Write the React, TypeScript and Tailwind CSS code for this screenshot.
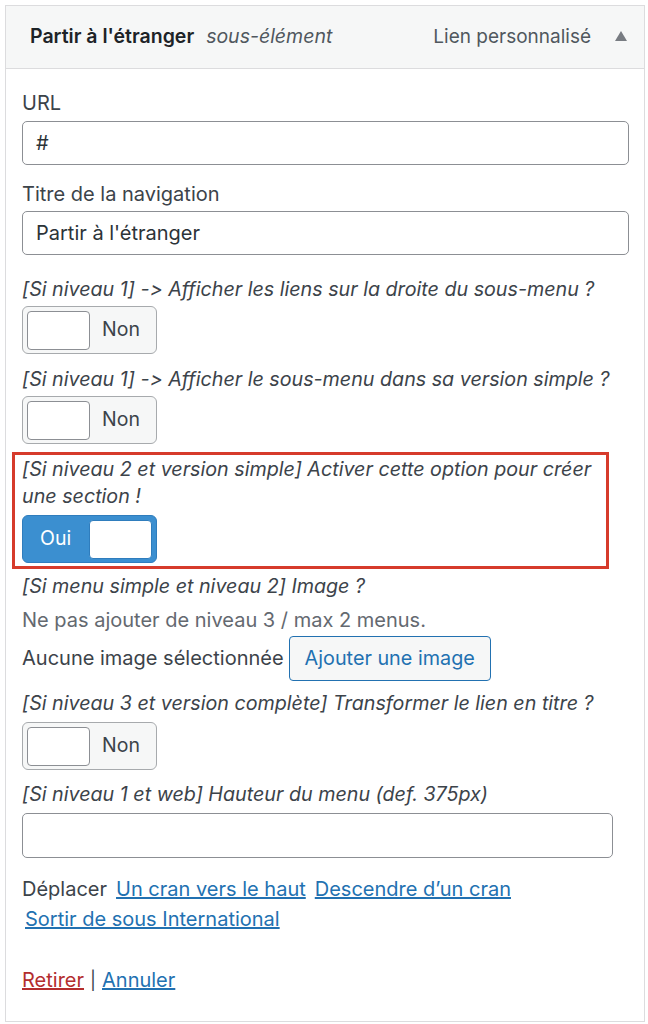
import React from 'react';

const font = { fontFamily: 'Inter, Roboto, "Liberation Sans", sans-serif' };

const Label: React.FC<{ className?: string; children: React.ReactNode }> = ({ className = '', children }) => (
    <div className={`italic text-[19.7px] leading-[27px] text-[#3c434a] ${className}`}>{children}</div>
);

const Toggle: React.FC<{ on?: boolean; className?: string }> = ({ on, className = '' }) =>
    on ? (
        <div className={`flex items-center w-[135px] h-[48px] rounded-[6px] border border-[#2f7dbd] bg-[#3b8fd0] pl-[17px] pr-[4px] ${className}`}>
            <span className="text-[19.5px] text-white flex-1">Oui</span>
            <div className="w-[63px] h-[39px] rounded-[4px] bg-white border border-[#2f7dbd]" />
        </div>
    ) : (
        <div className={`flex items-center w-[135px] h-[48px] rounded-[6px] border border-[#a7aaad] bg-[#f6f7f7] pl-[4px] ${className}`}>
            <div className="w-[63px] h-[39px] rounded-[4px] bg-white border border-[#8c8f94]" />
            <span className="text-[19.5px] text-[#3c434a] ml-[12px]">Non</span>
        </div>
    );

const App: React.FC = () => {
    return (
        <div className="bg-white w-[648px] min-h-[1024px] pt-[5px] [font-feature-settings:'calt'_0,'liga'_0]" style={font}>
            <div className="ml-[5px] w-[640px] border border-[#dcdcde]">
                <header className="h-[63px] bg-[#f6f7f7] border-b border-[#dcdcde] flex items-center pl-[24px] pr-[17px]">
                    <span className="text-[19.5px] font-semibold text-[#1d2327]">Partir à l'étranger</span>
                    <span className="text-[19.5px] italic text-[#50575e] ml-[12px]">sous-élément</span>
                    <span className="ml-auto text-[19px] text-[#50575e]">Lien personnalisé</span>
                    <svg width="12" height="10" viewBox="0 0 12 10" className="ml-[24px] mb-[2px]">
                        <polygon points="6,0 12,10 0,10" fill="#787c82" />
                    </svg>
                </header>

                <div className="pl-[16px] pr-[15px] pt-[21px] pb-[27px] text-[20px] text-[#3c434a]">
                    <div className="leading-[27px]">URL</div>
                    <div className="mt-[4px] h-[44px] rounded-[5px] border border-[#8c8f94] flex items-center px-[13px] text-[#2c3338]">#</div>

                    <div className="mt-[16px] leading-[27px]">Titre de la navigation</div>
                    <div className="mt-[3px] h-[44px] rounded-[5px] border border-[#8c8f94] flex items-center px-[13px] text-[#2c3338]">Partir à l'étranger</div>

                    <Label className="mt-[21px]">[Si niveau 1] -&gt; Afficher les liens sur la droite du sous-menu ?</Label>
                    <Toggle className="mt-[3px]" />

                    <Label className="mt-[12px]">[Si niveau 1] -&gt; Afficher le sous-menu dans sa version simple ?</Label>
                    <Toggle className="mt-[3px]" />

                    <div className="mt-[8px] ml-[-10px] w-[597px] border-[3px] border-[#d63b2b] pl-[7px] pt-[1px] pb-[3px]">
                        <Label>[Si niveau 2 et version simple] Activer cette option pour créer une section !</Label>
                        <Toggle on className="mt-[5px]" />
                    </div>

                    <Label className="mt-[4px]">[Si menu simple et niveau 2] Image ?</Label>
                    <div className="mt-[7px] leading-[27px] text-[#646970]">Ne pas ajouter de niveau 3 / max 2 menus.</div>
                    <div className="mt-[2px] flex items-center">
                        <span className="leading-[27px]">Aucune image sélectionnée</span>
                        <button className="ml-[5px] h-[45px] px-[15px] rounded-[4px] border border-[#2271b1] bg-[#f6f7f7] text-[#2271b1] text-[19.8px]">Ajouter une image</button>
                    </div>

                    <Label className="mt-[9px]">[Si niveau 3 et version complète] Transformer le lien en titre ?</Label>
                    <Toggle className="mt-[5px]" />

                    <Label className="mt-[11px]">[Si niveau 1 et web] Hauteur du menu (def. 375px)</Label>
                    <div className="mt-[5px] w-[591px] h-[45px] rounded-[5px] border border-[#8c8f94]" />

                    <div className="mt-[16px] leading-[30px] flex flex-wrap gap-x-[9px] gap-y-0">
                        <span>Déplacer</span>
                        <a className="text-[#2271b1] underline">Un cran vers le haut</a>
                        <a className="text-[#2271b1] underline">Descendre d’un cran</a>
                        <a className="text-[#2271b1] underline ml-[3px]">Sortir de sous International</a>
                    </div>

                    <div className="mt-[33px] leading-[27px]">
                        <a className="text-[#b32d2e] underline">Retirer</a>
                        <span className="mx-[6px] text-[#3c434a] text-[18px]">|</span>
                        <a className="text-[#2271b1] underline">Annuler</a>
                    </div>
                </div>
            </div>
        </div>
    );
};

export default App;
